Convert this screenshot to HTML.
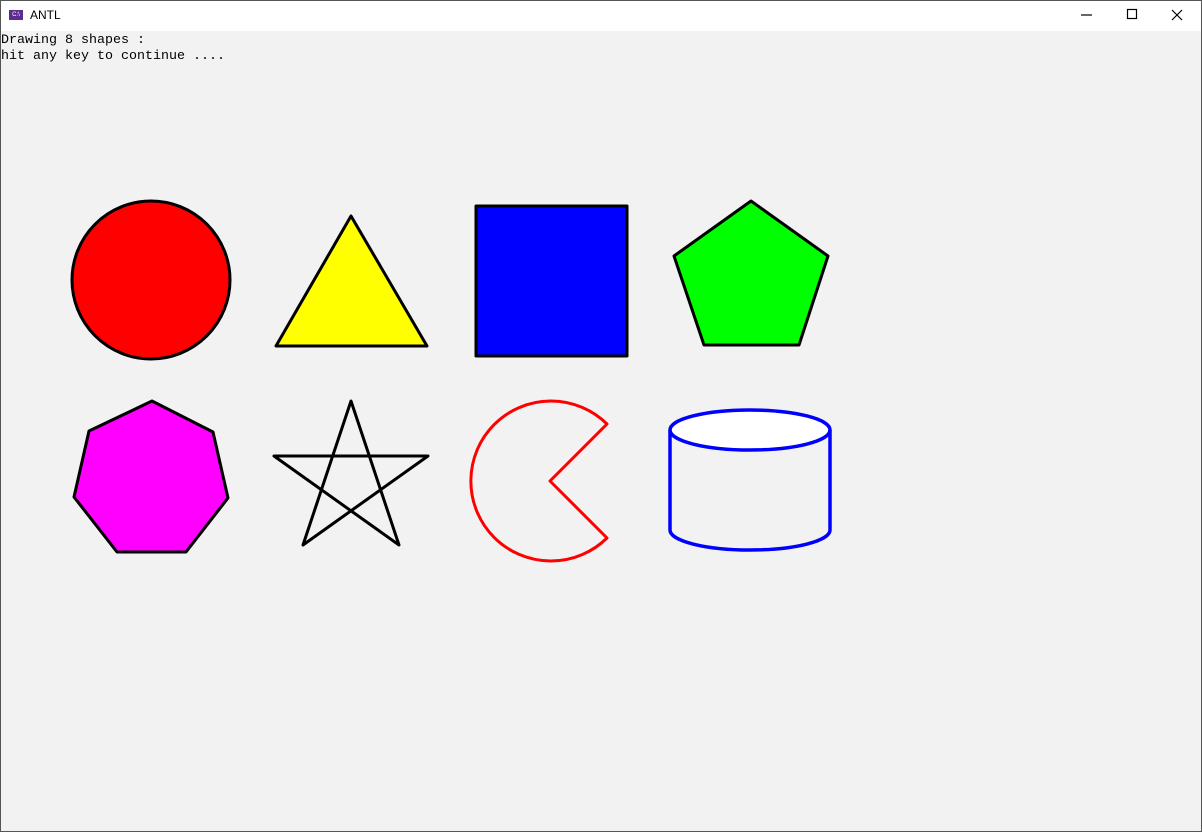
<!DOCTYPE html>
<html><head><meta charset="utf-8"><style>
html,body{margin:0;padding:0;width:1202px;height:832px;overflow:hidden;background:#f2f2f2;}
.win{position:absolute;left:0;top:0;width:1200px;height:830px;border:1px solid #555;background:#f2f2f2;}
.title{position:absolute;left:0;top:0;width:1200px;height:30px;background:#fff;}
.title .t{position:absolute;left:29px;top:7px;font:12px "Liberation Sans",sans-serif;color:#000;}
.icon{position:absolute;left:8px;top:9px;width:14px;height:10px;background:#5c2d91;color:#fff;font:6px "Liberation Sans",sans-serif;line-height:10px;text-align:center;}
.txt{position:absolute;left:0;top:32px;font:13.33px/16px "Liberation Mono",monospace;color:#000;white-space:pre;}
svg{position:absolute;left:-1px;top:-1px;}
</style></head><body>
<div class="win">
<div class="title"><div class="icon">C:\</div><div class="t">ANTL</div></div>
<div class="txt">Drawing 8 shapes :
hit any key to continue ....</div>
<svg width="1202" height="832" viewBox="0 0 1202 832">
<g stroke-width="1.2" stroke="#000" fill="none">
<line x1="1081" y1="15" x2="1092" y2="15"/>
<rect x="1127.5" y="9.5" width="9" height="9"/>
<line x1="1172" y1="10" x2="1182" y2="20"/><line x1="1182" y1="10" x2="1172" y2="20"/>
</g>
<g stroke="#000" stroke-width="3" stroke-linejoin="round">
<circle cx="151" cy="280" r="79" fill="#f00"/>
<polygon points="351,216 276,346 427,346" fill="#ff0"/>
<rect x="476" y="206" width="151" height="150" fill="#00f"/>
<polygon points="751,201 828,256 799,345 704,345 674,256" fill="#0f0"/>
<polygon points="152,401 213,432 228,498 186,552 117,552 74,497 89,431" fill="#f0f"/>
<polygon points="351,401 399,545 274,456 428,456 303,545" fill="none"/>
</g>
<path d="M607,424 A80,80 0 1 0 607,538 L550,481 Z" fill="none" stroke="#f00" stroke-width="3" stroke-linejoin="round"/>
<g stroke="#00f" stroke-width="3.5" fill="none">
<ellipse cx="750" cy="430" rx="80" ry="20" fill="#fff"/>
<path d="M670,430 L670,530 A80,20 0 0 0 830,530 L830,430"/>
</g>
</svg>
</div>
</body></html>
